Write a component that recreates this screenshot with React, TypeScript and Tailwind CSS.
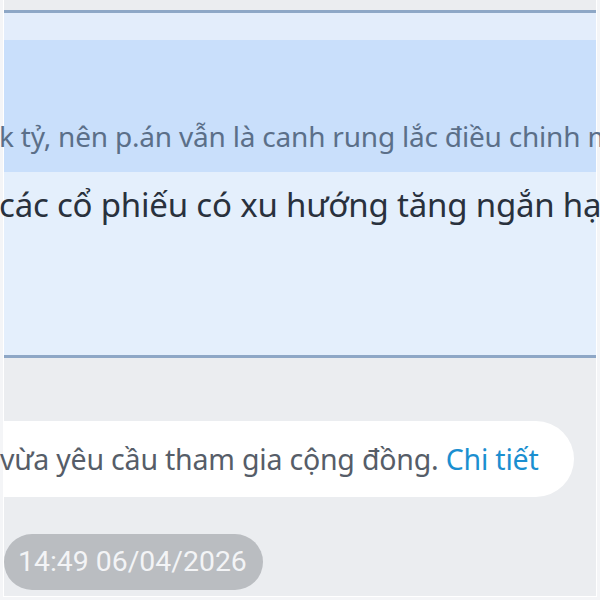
export default function App() {
  return (
    <div className="h-[600px] w-[600px] overflow-hidden bg-[#f4f5f7] font-['Noto_Sans',sans-serif]">
      <div className="mx-[3px] flex h-[597px] flex-col border-x border-b border-white bg-[#ebedf0]">
        {/* message card */}
        <div className="mt-[10px] flex flex-col border-y-[3px] border-[#8ea7c6] bg-[#e4effc]">
          <div className="h-[27px] bg-[#e3edfb]" />
          {/* quoted reply */}
          <div className="flex h-[132px] items-end bg-[#c9dffb] pb-[22px]">
            <p className="-ml-[5px] whitespace-nowrap text-[28px] leading-none tracking-[-0.2px] text-[#5b6f89]">
              k tỷ, nên p.án vẫn là canh rung lắc điều chinh mạnh
            </p>
          </div>
          <div className="h-[183px] pt-[12px]">
            <p className="-ml-[5px] whitespace-nowrap text-[33px] leading-tight tracking-[-0.2px] text-[#29313d]">
              các cổ phiếu có xu hướng tăng ngắn hạn
            </p>
          </div>
        </div>

        {/* system notice */}
        <div className="mt-[63px] flex h-[76px] w-[570px] items-center rounded-r-full bg-white">
          <p className="-ml-[4px] whitespace-nowrap text-[28.5px] tracking-[-0.2px] text-[#565d68]">
            vừa yêu cầu tham gia cộng đồng. <span className="text-[#1b8fd0]">Chi tiết</span>
          </p>
        </div>

        {/* timestamp */}
        <div className="mt-[37px] flex h-[56px] w-[259px] items-center rounded-full bg-[#babdc1] pl-[14px]">
          <span className="font-['Roboto',sans-serif] text-[28.4px] text-[#f3f4f6]">14:49 06/04/2026</span>
        </div>
      </div>
    </div>
  );
}
